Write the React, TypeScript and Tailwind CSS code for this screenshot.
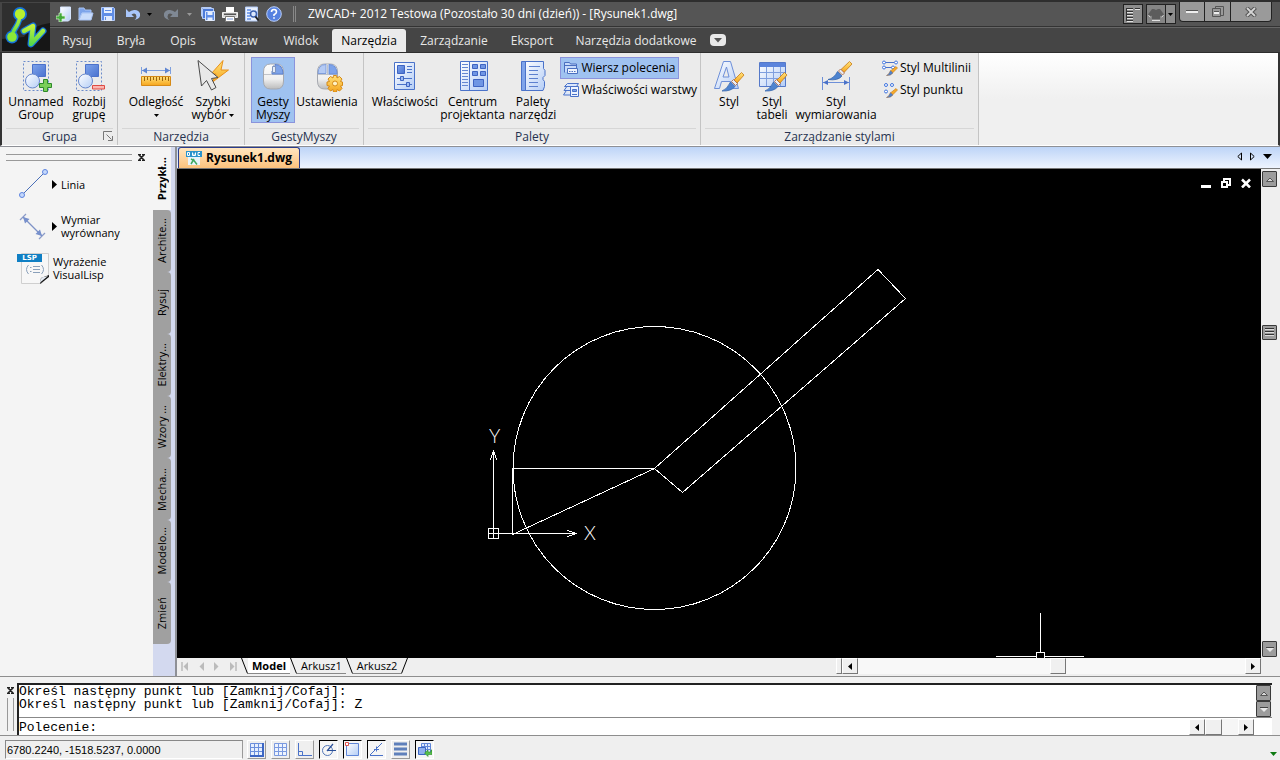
import React from "react";

type Kids = { children?: React.ReactNode };

const Svg = ({ w, h = w, children }: Kids & { w: number; h?: number }) => (
  <svg width={w} height={h} viewBox={`0 0 ${w} ${h}`} fill="none" className="block shrink-0" aria-hidden="true">
    {children}
  </svg>
);

const Gradients = () => (
  <svg width="0" height="0" className="absolute" aria-hidden="true">
    <defs>
      <linearGradient id="blue" x1="0" y1="0" x2="1" y2="1">
        <stop offset="0" stopColor="#7ea4ec" />
        <stop offset="1" stopColor="#4a72cf" />
      </linearGradient>
      <linearGradient id="pale" x1="0" y1="0" x2="1" y2="1">
        <stop offset="0" stopColor="#ffffff" />
        <stop offset="1" stopColor="#b4cdf6" />
      </linearGradient>
      <linearGradient id="gold" x1="0" y1="0" x2="0" y2="1">
        <stop offset="0" stopColor="#ffe27a" />
        <stop offset="1" stopColor="#f6a51c" />
      </linearGradient>
      <linearGradient id="mouse" x1="0" y1="0" x2="0" y2="1">
        <stop offset="0" stopColor="#fdfdfd" />
        <stop offset="0.6" stopColor="#efefef" />
        <stop offset="1" stopColor="#bcbcbc" />
      </linearGradient>
      <linearGradient id="lime" x1="0" y1="0" x2="0" y2="1">
        <stop offset="0" stopColor="#c3f53c" />
        <stop offset="1" stopColor="#57d84a" />
      </linearGradient>
    </defs>
  </svg>
);

/* ---------- application logo ---------- */
const Logo = () => (
  <Svg w={48}>
    <rect width="48" height="48" fill="#161616" />
    <path d="M0 0h48v20Q30 22 22 34L0 36z" fill="#2f2f2f" />
    <g stroke="#1573d8" strokeLinecap="round" strokeLinejoin="round">
      <path d="M18 10Q18 18 14 24T10 34" strokeWidth="6" />
      <path d="M22 28L31 23L29 41L41 28" strokeWidth="7" />
    </g>
    <circle cx="18" cy="11" r="7" fill="#1573d8" />
    <circle cx="10" cy="34" r="6.500" fill="#1573d8" />
    <g stroke="url(#lime)" strokeLinecap="round" strokeLinejoin="round">
      <path d="M18 10Q18 18 14 24T10 34" strokeWidth="3.500" />
      <path d="M22 28L31 23L29 41L41 28" strokeWidth="4.500" />
    </g>
    <circle cx="18" cy="11" r="5.200" fill="#b6f02f" />
    <circle cx="10" cy="34" r="4.800" fill="#8be838" />
  </Svg>
);

/* ---------- quick access icons ---------- */
const NewIcon = () => (
  <Svg w={16}>
    <path d="M4.500 1h10v12l-2 2h-8z" fill="url(#pale)" stroke="#d6e4fb" />
    <path d="M3 7h3v3h3v3H6v3H3v-3H0v-3h3z" fill="#43a83a" stroke="#d9f3d2" strokeWidth=".7" />
  </Svg>
);
const OpenIcon = () => (
  <Svg w={16}>
    <path d="M1 2h5l1 2h6v3H4l-3 7z" fill="#7da4ea" stroke="#a9c4f4" />
    <path d="M4 7h11l-2 7H1z" fill="#c9dcfb" stroke="#a9c4f4" />
  </Svg>
);
const SaveIcon = () => (
  <Svg w={16}>
    <path d="M1.500 1.500h12l1 1v12h-13z" fill="#5f8de6" stroke="#b4cbf6" />
    <path d="M4 2h8v5H4z" fill="#e6effe" />
    <path d="M4 10h8v5H4z" fill="#dfe9fc" />
    <path d="M5.500 11v3M5 4.500h6" stroke="#5f8de6" />
  </Svg>
);
const UndoIcon = ({ color }: { color: string }) => (
  <Svg w={16}>
    <path d="M1 3v8h8L6.500 8.500Q11 6 11.500 10.500Q11.500 12.500 9.500 14Q16 12.500 15 7.500Q13.500 3.500 9 4Q6 4.500 4 6z" fill={color} />
  </Svg>
);
const RedoIcon = ({ color }: { color: string }) => (
  <Svg w={16}>
    <path d="M15 3v8H7l2.500-2.500Q5 6 4.500 10.500Q4.500 12.500 6.500 14Q0 12.500 1 7.500Q2.500 3.500 7 4Q10 4.500 12 6z" fill={color} />
  </Svg>
);
const SaveAllIcon = () => (
  <Svg w={16}>
    <path d="M1.500 10.500v-9h10" stroke="#b4cbf6" />
    <path d="M2.500 12.500v-10h11v10z" fill="#4d7bd8" stroke="#b4cbf6" />
    <path d="M5.500 5.500h9v9h-9z" fill="#5f8de6" stroke="#dbe7fc" />
    <path d="M7.500 6h5v3h-5zM7.500 11.500h5V15h-5z" fill="#e6effe" />
  </Svg>
);
const PrintIcon = () => (
  <Svg w={16}>
    <path d="M4 1h8v5H4z" fill="#fff" />
    <path d="M0.500 6.500h15v5h-15z" fill="#d5d5d5" stroke="#f0f0f0" />
    <path d="M2 7.500h12v1.500H2z" fill="#555" />
    <path d="M3.500 10.500h9v5h-9z" fill="#fff" stroke="#777" />
    <path d="M5 13h6" stroke="#7a9ce0" />
  </Svg>
);
const PreviewIcon = () => (
  <Svg w={16}>
    <path d="M1.500 1h12v14h-12z" fill="#eaf1fe" stroke="#b4cbf6" />
    <path d="M3 4h4M3 7h3M3 10h3M3 13h4" stroke="#5f8de6" strokeWidth="1.500" />
    <circle cx="9.500" cy="8" r="3" fill="#dce8fd" stroke="#3d62b0" strokeWidth="1.500" />
    <path d="M11.500 10.500l3 4" stroke="#222" strokeWidth="2" />
  </Svg>
);
const HelpIcon = () => (
  <Svg w={16}>
    <circle cx="8" cy="8" r="7.300" fill="#5681e0" stroke="#b9cdf6" />
    <path d="M5.500 6q0-2.500 2.500-2.500T10.500 6Q10.500 7.300 8 8.700V10" stroke="#fff" strokeWidth="1.600" />
    <path d="M7.200 11.200h1.600v1.600H7.200z" fill="#fff" />
  </Svg>
);

/* ---------- large ribbon icons ---------- */
const GroupShapes = () => (
  <>
    <path d="M3.500 1.500h25v29h-25z" stroke="#6a8bcb" strokeDasharray="2 2" />
    <path d="M12.500 4.500h13v12h-13z" fill="url(#blue)" stroke="#4d72cb" />
    <circle cx="12.500" cy="21" r="7" fill="url(#pale)" stroke="#6787cc" />
  </>
);
const UnnamedGroupIcon = () => (
  <Svg w={32}>
    <GroupShapes />
    <path d="M23.500 19.500h4v4h4v4h-4v4h-4v-4h-4v-4h4z" fill="#7bcf58" stroke="#2d8a2a" />
  </Svg>
);
const UngroupIcon = () => (
  <Svg w={32}>
    <GroupShapes />
    <path d="M19.500 25.500h12v3.500h-12z" fill="#fbb5b0" stroke="#de4a43" />
  </Svg>
);
const DistanceIcon = () => (
  <Svg w={32}>
    <path d="M1.500 7v7M30.500 7v7M2 10.500h28" stroke="#7d9fde" />
    <path d="M2 10.500l5-3v6zM30 10.500l-5-3v6z" fill="#5f86d2" />
    <path d="M1.500 16.500h29v9h-29z" fill="url(#gold)" stroke="#d68a17" />
    <path d="M4.500 17v4M7.500 17v3M10.500 17v4M13.500 17v3M16.500 17v4M19.500 17v3M22.500 17v4M25.500 17v3M28.500 17v4" stroke="#9c6410" />
  </Svg>
);
const QuickSelectIcon = () => (
  <Svg w={32}>
    <path d="M26 0.500L14 14h5l-4 8.500L31.500 10H24z" fill="url(#gold)" stroke="#e8901a" strokeLinejoin="round" />
    <path d="M1 0.500L4.500 26l5-5.500 5 9.500 4.500-2.500-4.500-9 6.500-1z" fill="#e8e8e8" stroke="#4a4a4a" strokeLinejoin="round" />
  </Svg>
);
const MouseShape = () => (
  <>
    <path d="M6.500 12q0-8 7-8h6q7 0 7 8v9q0 8-7 8h-6q-7 0-7-8z" fill="url(#mouse)" stroke="#a6a9b0" />
    <path d="M7 14.500h19M16.500 5v9" stroke="#c0c3c9" />
  </>
);
const GestureIcon = () => (
  <Svg w={32}>
    <MouseShape />
    <path d="M18 4.500q8 0 8 9.500h-11v-3h3z" fill="#7ea3e8" stroke="#5c82d2" />
    <path d="M15.500 6.500h3v6h-3z" fill="#e4ebf8" stroke="#7f95bd" />
  </Svg>
);
const SettingsIcon = () => (
  <Svg w={32}>
    <MouseShape />
    <path d="M18 4.500q8 0 8 9.500h-8z" fill="#7da3ea" stroke="#6b8fd8" />
    <path d="M7 13.500q0-9 8-9v9z" fill="#b4caf4" stroke="#7f9ddb" />
    <g fill="url(#gold)" stroke="#d68a17">
      <path d="M22.500 15.500h3l.500 2.500 2.500-1.500 2.500 2.500-1.500 2.500 2 .500v3.500l-2 .500 1.500 2.500-2.500 2.500-2.500-1.500-.500 2.500h-3l-.500-2.500-2.500 1.500-2.500-2.500 1.500-2.500-2.500-.500v-3.500l2.500-.500-1.500-2.500 2.500-2.500 2.500 1.500z" />
      <circle cx="24" cy="23.500" r="2.500" fill="#fff3c4" />
    </g>
  </Svg>
);
const PropertiesIcon = () => (
  <Svg w={32}>
    <path d="M5.500 2.500h20v27h-20z" fill="url(#pale)" stroke="#4a72c9" />
    <path d="M8.500 5.500h7v8h-7z" fill="url(#blue)" stroke="#3f64c2" />
    <path d="M18 6.500h5M18 9.500h5M18 12.500h5M8 18.500h15M8 24.500h15" stroke="#4a72c9" />
    <path d="M11.500 16.500h3v4h-3zM17.500 22.500h3v4h-3z" fill="#9dbcf2" stroke="#3f64c2" />
  </Svg>
);
const DesignCenterIcon = () => (
  <Svg w={32}>
    <path d="M3.500 1.500h27v29h-27z" fill="url(#pale)" stroke="#4a72c9" />
    <path d="M12.500 2v28" stroke="#4a72c9" />
    <path d="M5 4.500h6M5 7.500h6M5 10.500h6M5 13.500h6M5 16.500h6M5 19.500h6M5 22.500h6M5 25.500h6" stroke="#6487d2" />
    <path d="M15.500 4.500h5v4h-5zM23.500 4.500h5v4h-5zM15.500 11.500h5v4h-5zM23.500 11.500h5v4h-5zM16.500 19.500h10v7h-10z" fill="#6f96e4" stroke="#3f64c2" />
  </Svg>
);
const ToolPalettesIcon = () => (
  <Svg w={32}>
    <path d="M5.500 1.500h21v7l1.500 2v5l-2 2v2l1.500 2v5l-1.500 4H5.500z" fill="url(#pale)" stroke="#4a72c9" />
    <path d="M4.500 1.500h4v29h-4z" fill="#7fa4ea" stroke="#4a72c9" />
    <path d="M12 6.500h11M12 10.500h9M12 14.500h9M12 18.500h9M12 22.500h9M12 26.500h9" stroke="#5c80cf" />
  </Svg>
);
const Brush = () => (
  <>
    <path d="M28.500 12.500l2.500 2.500-7 8-3-3z" fill="url(#gold)" stroke="#c67a14" strokeWidth=".8" />
    <path d="M20.500 19.500l4 4-2 2-4-4z" fill="#e8edf5" stroke="#a8603a" strokeWidth=".8" />
    <path d="M17.500 22l4.500 4.500q-4 5-13 4.500 5-1.500 8.500-9z" fill="#4d83cf" stroke="#2c5fa8" strokeWidth=".7" />
  </>
);
const TextStyleIcon = () => (
  <Svg w={32}>
    <path d="M1.500 28.500L10.500 1.500h7l8 27h-6l-2-7H8.500l-2 7zM10 17h6L13.500 7z" fill="url(#pale)" stroke="#6d8fd8" />
    <Brush />
  </Svg>
);
const TableStyleIcon = () => (
  <Svg w={32}>
    <path d="M3.500 2.500h26v24h-26z" fill="url(#pale)" stroke="#5579c9" />
    <path d="M4 3h25v4H4z" fill="#5b84dc" />
    <path d="M4 12.500h25M4 18.500h25M10.500 7v19M17.500 7v19M24.500 7v19" stroke="#7f9fde" />
    <Brush />
  </Svg>
);
const DimStyleIcon = () => (
  <Svg w={32}>
    <path d="M2.500 17v13M29.500 17v13M3 22.500h26" stroke="#6d8fd8" />
    <path d="M3 22.500l5-2.500v5zM29 22.500l-5-2.500v5z" fill="#4a72c9" />
    <path d="M29.500 1.500l2.500 2.500-8 8.500-3-3z" fill="url(#gold)" stroke="#c67a14" strokeWidth=".8" />
    <path d="M20.500 9l4 4-2 2-4-4z" fill="#e8edf5" stroke="#a8603a" strokeWidth=".8" />
    <path d="M17.500 11.500l4.500 4.500q-4 5-14 3.500 6-1 9.500-8z" fill="#4d83cf" stroke="#2c5fa8" strokeWidth=".7" />
  </Svg>
);

/* ---------- small ribbon icons ---------- */
const CommandLineIcon = () => (
  <Svg w={16}>
    <path d="M1.500 12.500v-10h5l1 1.500h6v4" fill="#c7dafa" stroke="#4a6fc0" />
    <path d="M2 5.500h11" stroke="#4a6fc0" />
    <path d="M4.500 8.500h10v5h-10z" fill="#eef4fe" stroke="#4a6fc0" />
    <path d="M6 11.500h1.500M8.500 11.500H10M11 11.500h1.500" stroke="#4a6fc0" />
  </Svg>
);
const LayerPropsIcon = () => (
  <Svg w={16}>
    <path d="M4.500 1.500h11l-2 3H1.500zM3.500 5L1 8.500h9M3 9l-2.500 4h9" fill="#dbe7fc" stroke="#4a72c9" />
    <path d="M7.500 4.500h8v10h-8z" fill="#eef4fe" stroke="#4a72c9" />
    <path d="M9.500 7.500h4v2h-4zM9 12.500h5" stroke="#4a72c9" fill="#7fa4ea" />
  </Svg>
);
const SmallBrush = () => (
  <>
    <path d="M14 6.500l1.500 1.500-4.500 4.500-2-2z" fill="#f6ab2a" stroke="#c67a14" strokeWidth=".6" />
    <path d="M8.500 10.500l2.500 2.500q-2.500 3-6.500 2.500 2.500-1 4-5z" fill="#4d83cf" stroke="#8d5f3a" strokeWidth=".5" />
  </>
);
const MultilineIcon = () => (
  <Svg w={16}>
    <path d="M3 2.500h9M3 7.500h7" stroke="#4a72c9" />
    <g fill="#fff" stroke="#3f74e0">
      <circle cx="2" cy="2.500" r="1.500" />
      <circle cx="14" cy="2.500" r="1.500" />
      <circle cx="2" cy="7.500" r="1.500" />
      <circle cx="11" cy="7.500" r="1.500" />
    </g>
    <SmallBrush />
  </Svg>
);
const PointStyleIcon = () => (
  <Svg w={16}>
    <g fill="#fff" stroke="#3f74e0">
      <circle cx="4" cy="3" r="1.500" />
      <circle cx="10" cy="3" r="1.500" />
      <circle cx="4" cy="9.500" r="1.500" />
    </g>
    <SmallBrush />
  </Svg>
);

/* ---------- tool palette icons ---------- */
const LineIcon = () => (
  <Svg w={32}>
    <path d="M5 27L28 4" stroke="#4a6fb8" />
    <circle cx="5" cy="27" r="2.500" fill="#c5d8fb" stroke="#5d84e0" />
    <circle cx="28" cy="4" r="2.500" fill="#c5d8fb" stroke="#5d84e0" />
  </Svg>
);
const AlignedDimIcon = () => (
  <Svg w={32}>
    <path d="M3 10l6-6M22 29l6-6" stroke="#8c9cc8" strokeWidth="1.300" />
    <path d="M6 7l19 19" stroke="#7e92c6" strokeWidth="1.300" />
    <path d="M6 7l2 6.500 4.500-4.500zM25 26l-2-6.500-4.500 4.500z" fill="#7790cc" />
  </Svg>
);
const LispIcon = () => (
  <div className="relative h-8 w-8 shrink-0">
    <Svg w={32}>
      <path d="M4.500 1.500h27v22l-7 8h-20z" fill="#f7f7f7" stroke="#cfcfcf" />
      <path d="M23 32l9-7v-2l-8 3z" fill="#111" />
      <path d="M22.500 31l2-5.500 6.500-1.500z" fill="#e6ecf4" />
      <path d="M11.500 13q-4 4.500 0 9M24.500 13q4 4.500 0 9M13 15.500h1.500M13 19.500h1.500M16 14.500h7M16 17.500h7M16 20.500h7" stroke="#8aa0ba" />
    </Svg>
    <span className="absolute left-0 top-0.5 w-[25px] bg-[#0f7fc4] text-center font-['DejaVu_Sans'] text-[7px] font-bold leading-[8px] text-white">
      LSP
    </span>
  </div>
);

const Caret = ({ className = "" }: { className?: string }) => (
  <svg width="5" height="3" viewBox="0 0 5 3" className={`inline-block ${className}`} aria-hidden="true">
    <path d="M0 0h5L2.500 3z" fill="currentColor" />
  </svg>
);

/* ---------- ribbon pieces ---------- */
const BigButton = ({ icon, width, active, children }: Kids & { icon: React.ReactNode; width: string; active?: boolean }) => (
  <button
    className={`flex h-[66px] ${width} flex-col items-center whitespace-nowrap border pt-0.5 text-xs leading-[13px] text-black ${
      active ? "border-[#8a93dc] bg-[#9fc2f0]" : "border-transparent"
    }`}
  >
    {icon}
    <span className="mt-[3px] block text-center">{children}</span>
  </button>
);

const SmallButton = ({ icon, active, children }: Kids & { icon: React.ReactNode; active?: boolean }) => (
  <button
    className={`flex h-[22px] items-center gap-0.5 whitespace-nowrap border px-0.5 text-xs text-black ${
      active ? "border-[#8a93dc] bg-[#9fc2f0]" : "border-transparent"
    }`}
  >
    {icon}
    {children}
  </button>
);

const Group = ({ title, width, pad = "pl-2", launcher, children }: Kids & { title: string; width: string; pad?: string; launcher?: boolean }) => (
  <section className={`flex ${width} shrink-0 flex-col border-r border-[#c4c4c4] bg-[#ebebeb]`}>
    <div className={`flex flex-1 items-start pt-1 ${pad}`}>{children}</div>
    <div className="relative mx-1 flex h-[17px] items-center justify-center border-t border-[#d6d6d6] text-xs text-[#26324f]">
      {title}
      {launcher && (
        <button aria-label="Opcje grupy" className="absolute right-0 top-0.5">
          <Svg w={10}>
            <path d="M.5 9V.5H9M3.500 3.500l5 5M9.500 5v4.500H5" stroke="#777" />
          </Svg>
        </button>
      )}
    </div>
  </section>
);

const ribbonTabs = [
  { name: "Rysuj", width: "w-[54px]" },
  { name: "Bryła", width: "w-[54px]" },
  { name: "Opis", width: "w-[50px]" },
  { name: "Wstaw", width: "w-[62px]" },
  { name: "Widok", width: "w-[62px]" },
  { name: "Narzędzia", width: "w-[74px]" },
  { name: "Zarządzanie", width: "w-[96px]" },
  { name: "Eksport", width: "w-[60px]" },
  { name: "Narzędzia dodatkowe", width: "w-[148px]" },
];

const quick = "flex w-[22px] items-center justify-center";

const Header = () => (
  <header className="flex h-[52px] shrink-0 border-t-2 border-[#2e2e2e] bg-[#454545]">
    <button aria-label="Menu programu" className="w-[50px] shrink-0 pl-0.5">
      <Logo />
    </button>
    <div className="flex min-w-0 flex-1 flex-col">
      <div className="flex h-[25px] items-center border-b border-[#333] bg-[#555] pl-[3px]">
        <button aria-label="Nowy" className={quick}><NewIcon /></button>
        <button aria-label="Otwórz" className={quick}><OpenIcon /></button>
        <button aria-label="Zapisz" className={quick}><SaveIcon /></button>
        <button aria-label="Cofnij" className="flex w-7 items-center justify-center"><UndoIcon color="#a9c6fa" /></button>
        <button aria-label="Lista cofnięć" className="flex w-2 items-center text-black"><Caret /></button>
        <button aria-label="Ponów" className="flex w-8 items-center justify-center"><RedoIcon color="#7f8894" /></button>
        <button aria-label="Lista ponowień" className="flex w-2.5 items-center text-[#999]"><Caret /></button>
        <button aria-label="Zapisz wszystko" className={quick}><SaveAllIcon /></button>
        <button aria-label="Drukuj" className={quick}><PrintIcon /></button>
        <button aria-label="Podgląd" className={quick}><PreviewIcon /></button>
        <button aria-label="Pomoc" className={quick}><HelpIcon /></button>
        <span className="mx-2 h-4 w-[3px] border-x border-[#888]" />
        <h1 className="ml-1 flex-1 truncate text-xs text-white">ZWCAD+ 2012 Testowa (Pozostało 30 dni (dzień)) - [Rysunek1.dwg]</h1>
        <div className="flex h-full items-center pr-2">
          <button aria-label="Układ" className="mr-[3px] flex h-5 w-5 items-center justify-center border border-[#222] bg-[#8d8d8d]">
            <Svg w={16}>
              <path d="M1 3.500h7M10 3.500h5M2 6.500h6M2 9.500h6M2 12.500h6M2 15.500h6" stroke="#e3e3e3" />
              <path d="M1 2.500h7M10 2.500h5M2 5.500h6M2 8.500h6M2 11.500h6M2 14.500h6M1.500 3v12" stroke="#333" />
            </Svg>
          </button>
          <button aria-label="Skórka" className="flex h-5 w-5 items-center justify-center border border-[#222] bg-[#858585]">
            <Svg w={16}>
              <path d="M4 3h2l2 1 2-1h2l4 5.500-2.500 2L12 9.500V13H4V9.500l-1.500 1L0 8.500z" fill="#5c5c5c" />
              <path d="M4 14.500h8M.5 9.500l2 1.500M15.500 9.500l-2 1.500" stroke="#e3e3e3" />
            </Svg>
          </button>
          <button aria-label="Lista skórek" className="mr-[3px] flex h-5 w-2.5 items-center justify-center border border-l-0 border-[#222] bg-[#8d8d8d] text-black">
            <Caret />
          </button>
          <div className="flex h-full items-start">
            <button aria-label="Minimalizuj" className="flex h-5 w-[26px] items-center justify-center rounded-bl border border-t-0 border-[#222] bg-[#9a9a9a]">
              <Svg w={12}><path d="M0 4.500h12" stroke="#555" /><path d="M0 6h12" stroke="#eee" strokeWidth="2" /></Svg>
            </button>
            <button aria-label="Przywróć" className="flex h-5 w-[26px] items-center justify-center border-b border-r border-[#222] bg-[#9a9a9a]">
              <Svg w={12}><path d="M3.500 3V.5h8v9H9" stroke="#555" /><path d="M.5 2.500h8v8h-8z" stroke="#555" /><path d="M2 5.500h5" stroke="#555" /><path d="M2 7h5" stroke="#eee" strokeWidth="2" /></Svg>
            </button>
            <button aria-label="Zamknij" className="flex h-5 w-[41px] items-center justify-center rounded-br border-b border-r border-[#222] bg-[#9a9a9a]">
              <Svg w={12} h={10}><path d="M1.500 .5l9 9M10.500 .5l-9 9" stroke="#555" strokeWidth="4" /><path d="M2 1l8 8M10 1L2 9" stroke="#d5d5d5" strokeWidth="1.800" /></Svg>
            </button>
          </div>
        </div>
      </div>
      <nav className="flex flex-1 items-end border-t border-[#666]">
        {ribbonTabs.map((t) => (
          <button
            key={t.name}
            className={`h-[23px] ${t.width} shrink-0 whitespace-nowrap pt-px text-xs ${
              t.name === "Narzędzia" ? "rounded-t-[3px] bg-[#ebebeb] text-black" : "text-[#e8e8e8]"
            }`}
          >
            {t.name}
          </button>
        ))}
        <button aria-label="Zwiń wstążkę" className="mb-1.5 flex h-3 w-4 items-center justify-center rounded bg-[#e8e8e8]">
          <Svg w={8} h={6}><path d="M0 1h8L4 5.500z" fill="#555" /></Svg>
        </button>
      </nav>
    </div>
  </header>
);

const Ribbon = () => (
  <div className="flex h-[94px] shrink-0 overflow-hidden border-x-2 border-b border-t border-x-[#333] border-b-white border-t-[#2e2e2e] bg-gradient-to-b from-white to-[#f0f0f0] to-50%">
    <Group title="Grupa" width="w-[116px]" pad="pl-1" launcher>
      <BigButton width="w-[60px]" icon={<UnnamedGroupIcon />}>Unnamed<br />Group</BigButton>
      <BigButton width="w-[46px]" icon={<UngroupIcon />}>Rozbij<br />grupę</BigButton>
    </Group>
    <Group title="Narzędzia" width="w-[127px]">
      <BigButton width="w-[60px]" icon={<DistanceIcon />}>Odległość<br /><Caret className="align-middle" /></BigButton>
      <BigButton width="w-[54px]" icon={<QuickSelectIcon />}>Szybki<br />wybór <Caret className="align-middle" /></BigButton>
    </Group>
    <Group title="GestyMyszy" width="w-[119px]" pad="pl-1.5">
      <BigButton width="w-[44px]" icon={<GestureIcon />} active>Gesty<br />Myszy</BigButton>
      <BigButton width="w-[64px]" icon={<SettingsIcon />}>Ustawienia</BigButton>
    </Group>
    <Group title="Palety" width="w-[337px]">
      <BigButton width="w-[66px]" icon={<PropertiesIcon />}>Właściwości</BigButton>
      <BigButton width="w-[70px]" icon={<DesignCenterIcon />}>Centrum<br />projektanta</BigButton>
      <BigButton width="w-[52px]" icon={<ToolPalettesIcon />}>Palety<br />narzędzi</BigButton>
      <div className="ml-0.5 flex flex-col items-start">
        <SmallButton icon={<CommandLineIcon />} active>Wiersz polecenia</SmallButton>
        <SmallButton icon={<LayerPropsIcon />}>Właściwości warstwy</SmallButton>
      </div>
    </Group>
    <Group title="Zarządzanie stylami" width="w-[278px]">
      <BigButton width="w-[40px]" icon={<TextStyleIcon />}>Styl</BigButton>
      <BigButton width="w-[46px]" icon={<TableStyleIcon />}>Styl<br />tabeli</BigButton>
      <BigButton width="w-[82px]" icon={<DimStyleIcon />}>Styl<br />wymiarowania</BigButton>
      <div className="ml-0.5 flex flex-col items-start">
        <SmallButton icon={<MultilineIcon />}>Styl Multilinii</SmallButton>
        <SmallButton icon={<PointStyleIcon />}>Styl punktu</SmallButton>
      </div>
    </Group>
  </div>
);

const paletteTabs = ["Archite...", "Rysuj", "Elektry...", "Wzory ...", "Mecha...", "Modelo...", "Zmień"];

const CloseX = () => (
  <Svg w={7}><path d="M0 .5h3M4 .5h3M0 6.500h3M4 6.500h3M1 1l5 5M6 1L1 6" stroke="#222" strokeWidth="1.500" /></Svg>
);

const Flyout = () => (
  <Svg w={5} h={9}><path d="M0 0l5 4.500L0 9z" fill="#000" /></Svg>
);

const Palette = () => (
  <aside className="flex shrink-0 border-r-2 border-[#8e9096] bg-[#d3d9ef]">
    <div className="w-[153px] bg-[#f4f4f4]">
      <div className="flex h-5 items-center gap-1.5 pl-1.5 pr-2">
        <span className="h-[7px] flex-1 border-y border-[#999]" />
        <button aria-label="Zamknij paletę"><CloseX /></button>
      </div>
      <div className="flex flex-col gap-2.5 pl-[17px] pt-px text-[11px] leading-[13px]">
        <button className="flex h-8 items-center gap-[3px] text-left"><LineIcon /><Flyout /><span className="ml-px">Linia</span></button>
        <button className="flex h-8 items-center gap-[3px] text-left"><AlignedDimIcon /><Flyout /><span className="ml-px">Wymiar<br />wyrównany</span></button>
        <button className="flex h-8 items-center gap-1 text-left"><LispIcon /><span>Wyrażenie<br />VisualLisp</span></button>
      </div>
    </div>
    <div className="flex w-[18px] flex-col">
      <button className="flex h-[63px] w-full items-center justify-center bg-[#f4f4f4]">
        <span className="rotate-180 text-[11px] font-bold leading-[14px] [writing-mode:vertical-rl]">Przykł...</span>
      </button>
      {paletteTabs.map((t) => (
        <button key={t} className="flex h-[62px] w-full items-center justify-center rounded-r-sm bg-[#a0a0a0]">
          <span className="rotate-180 whitespace-nowrap text-[11px] leading-[14px] [writing-mode:vertical-rl]">{t}</span>
        </button>
      ))}
    </div>
    <div className="w-1" />
  </aside>
);

const Drawing = () => (
  <svg className="block h-full w-full" fill="none" stroke="#fff" shapeRendering="crispEdges" role="img" aria-label="Rysunek">
    <circle cx="477.500" cy="298" r="141.500" />
    <path d="M477.500 298.500L701 99.500L728.500 128.500L505.500 322.500z" />
    <path d="M477.500 298.500H335.500V364.500z" />
    <path d="M311.500 358.500h10v10h-10zM316.500 368V280M312 363.500H400" />
    <path d="M316.500 280l-3 10M316.500 280l3 10M400 363.500l-10-3M400 363.500l-10 3" />
    <g fill="#fff" stroke="none" fontSize="19" fontWeight="300" fontFamily="Lato, 'Open Sans', sans-serif">
      <text x="312" y="273">Y</text>
      <text x="407" y="370">X</text>
    </g>
    <path d="M863.500 443v40M819 486.500h41M867 486.500h40M859.500 482.500h8v8h-8z" />
  </svg>
);

const GrayScroll = ({ dir }: { dir: "up" | "down" }) => (
  <button aria-label={dir === "up" ? "Przewiń w górę" : "Przewiń w dół"} className="flex h-4 w-[15px] shrink-0 items-center justify-center rounded-[1px] border border-[#3a3a3a] bg-[#9c9c9c]">
    <Svg w={8} h={5}>
      {dir === "up" ? <path d="M.5 4.500L4 1l3.500 3.500z" fill="#d8d8d8" stroke="#555" /> : <path d="M0 1h8L4 5z" fill="#e8e8e8" />}
      {dir === "down" && <path d="M0 .5h8" stroke="#444" />}
    </Svg>
  </button>
);

const raised = "flex h-4 shrink-0 items-center justify-center border border-b-[#777] border-r-[#777] border-l-white border-t-white bg-[#f0f0f0]";

const ArrowButton = ({ dir }: { dir: "left" | "right" }) => (
  <button aria-label={dir === "left" ? "Przewiń w lewo" : "Przewiń w prawo"} className={`${raised} w-4`}>
    <Svg w={4} h={7}>{dir === "left" ? <path d="M4 0v7L0 3.500z" fill="#000" /> : <path d="M0 0v7l4-3.500z" fill="#000" />}</Svg>
  </button>
);

const SheetTab = ({ name, active }: { name: string; active?: boolean }) => (
  <button className="flex h-4 items-center text-[11px] text-black">
    <Svg w={7} h={16}><path d="M.5 0l6 15.500" stroke="#000" /></Svg>
    <span className={`h-4 border-b border-[#888] px-1 leading-[15px] ${active ? "bg-white font-bold" : ""}`}>{name}</span>
  </button>
);

const Workspace = () => (
  <main className="flex min-w-0 flex-1 flex-col">
    <div className="flex h-[22px] shrink-0 items-end border-b border-[#777] bg-gradient-to-b from-[#bdd4f7] to-[#eef4fe]">
      <button className="ml-px flex h-[21px] items-center gap-1 rounded-t-[3px] border border-b-0 border-[#2b3c8c] bg-gradient-to-b from-[#ffe6c0] to-[#fcc27c] px-[7px] text-xs font-bold">
        <Svg w={16}>
          <path d="M2 3h12v12H2z" fill="#e9f4fb" />
          <path d="M0 1h16v6H0z" fill="#2a93cc" />
          <path d="M1.500 2.500v3h2v-3zM6.500 2.500v3h3v-3M8 3.500v2M14 2.500h-2v3h2" stroke="#fff" />
          <path d="M5 9l3 1.500 3 4M5 14l3-5" stroke="#40a860" strokeWidth="1.500" />
        </Svg>
        Rysunek1.dwg
      </button>
      <div className="ml-auto flex h-full items-center gap-2 pb-0.5 pr-2">
        <button aria-label="Poprzedni rysunek"><Svg w={5} h={9}><path d="M4.500 1v7L.8 4.500z" stroke="#000" /></Svg></button>
        <button aria-label="Następny rysunek"><Svg w={5} h={9}><path d="M.5 1v7l3.700-3.500z" stroke="#000" /></Svg></button>
        <button aria-label="Lista rysunków"><Svg w={9} h={5}><path d="M0 0h9L4.500 5z" fill="#000" /></Svg></button>
      </div>
    </div>
    <div className="flex min-h-0 flex-1 bg-[#efefef]">
      <div className="flex min-w-0 flex-1 flex-col">
        <div className="relative min-h-0 flex-1 overflow-hidden border-t border-black bg-black">
          <Drawing />
          <div className="absolute right-2.5 top-2 flex gap-2.5">
            <button aria-label="Minimalizuj rysunek"><Svg w={10}><path d="M0 8.500h10" stroke="#fff" strokeWidth="3" /></Svg></button>
            <button aria-label="Przywróć rysunek"><Svg w={10}><path d="M1 4h5v5H1zM3 3V1h6v6H7" stroke="#fff" strokeWidth="2" /></Svg></button>
            <button aria-label="Zamknij rysunek"><Svg w={10}><path d="M1 1.500l8 8M9 1.500l-8 8" stroke="#fff" strokeWidth="2.500" /></Svg></button>
          </div>
        </div>
        <div className="flex h-[18px] shrink-0 items-start">
          <div className="flex h-4 items-center gap-2.5 pl-1 pr-1">
            <button aria-label="Pierwszy arkusz"><Svg w={8} h={9}><path d="M1 0v9" stroke="#bbb" strokeWidth="1.500" /><path d="M7 0v9L2.500 4.500z" fill="#bbb" /></Svg></button>
            <button aria-label="Poprzedni arkusz"><Svg w={5} h={9}><path d="M5 0v9L.5 4.500z" fill="#bbb" /></Svg></button>
            <button aria-label="Następny arkusz"><Svg w={5} h={9}><path d="M0 0v9l4.500-4.500z" fill="#bbb" /></Svg></button>
            <button aria-label="Ostatni arkusz"><Svg w={8} h={9}><path d="M7 0v9" stroke="#bbb" strokeWidth="1.500" /><path d="M1 0v9l4.500-4.500z" fill="#bbb" /></Svg></button>
          </div>
          <SheetTab name="Model" active />
          <SheetTab name="Arkusz1" />
          <SheetTab name="Arkusz2" />
          <Svg w={7} h={16}><path d="M6.500 0L.5 15.500" stroke="#000" /></Svg>
          <div className="ml-auto flex h-4 w-[425px] shrink items-center bg-[#f8f8f8]">
            <span className={`${raised} w-1.5`} />
            <ArrowButton dir="left" />
            <span className="flex-1" />
            <span className={`${raised} w-4`} />
            <span className="w-[179px]" />
            <ArrowButton dir="right" />
          </div>
        </div>
      </div>
      <div className="flex w-[19px] shrink-0 flex-col items-start pb-[19px] pl-px pt-0.5">
        <GrayScroll dir="up" />
        <div className="flex flex-1 flex-col items-center justify-center">
          <div className="mb-41 flex h-[15px] w-[15px] items-center justify-center rounded-[1px] border border-[#3a3a3a] bg-[#9c9c9c]">
            <Svg w={9} h={8}><path d="M0 .5h9M0 3.500h9M0 6.500h9" stroke="#333" /><path d="M0 1.500h9M0 4.500h9M0 7.500h9" stroke="#ddd" /></Svg>
          </div>
        </div>
        <GrayScroll dir="down" />
      </div>
    </div>
  </main>
);

const CommandPanel = () => (
  <section className="flex shrink-0 border-y border-[#8e8e8e] bg-[#f2f2f2] pr-2 pt-1.5">
    <div className="flex w-[17px] shrink-0 flex-col items-center gap-1 pb-1 pl-1 pt-1">
      <button aria-label="Zamknij wiersz poleceń"><CloseX /></button>
      <span className="w-[7px] flex-1 border-x border-[#999]" />
    </div>
    <div className="flex min-w-0 flex-1 flex-col border-l-2 border-t-2 border-[#222] bg-white font-['Liberation_Mono',monospace] text-[13px] leading-[13px]">
      <div className="flex h-[33px] border-b border-[#888]">
        <div className="flex-1 whitespace-pre">
          <p>Określ następny punkt lub [Zamknij/Cofaj]:</p>
          <p>Określ następny punkt lub [Zamknij/Cofaj]: Z</p>
        </div>
        <div className="flex w-4 flex-col bg-[#f0f0f0]">
          <GrayScroll dir="up" />
          <GrayScroll dir="down" />
        </div>
      </div>
      <div className="flex h-[17px] items-end">
        <label htmlFor="command" className="pb-px">Polecenie:</label>
        <input id="command" className="ml-2 h-4 min-w-0 flex-1 outline-none" />
        <div className="mr-[18px] flex bg-[#f6f6f6]">
          <ArrowButton dir="left" />
          <span className={`${raised} w-[17px]`} />
          <span className="w-4" />
          <ArrowButton dir="right" />
        </div>
      </div>
    </div>
  </section>
);

const statusIcons: { label: string; on?: boolean; icon: React.ReactNode }[] = [
  {
    label: "Skok",
    icon: (
      <>
        <path d="M1.500 1.500h12v12h-12z" fill="#e6effe" />
        <path d="M1.500 1.500h12v12h-12zM5.500 1v13M9.500 1v13M1 5.500h13M1 9.500h13" stroke="#6a8edc" />
        <path d="M14 1v13H1" stroke="#3c66c4" strokeWidth="2" />
      </>
    ),
  },
  { label: "Siatka", icon: <path d="M1.500 1.500h12v12h-12zM5.500 1v13M9.500 1v13M1 5.500h13M1 9.500h13" fill="#eef4fe" stroke="#7b9ae0" /> },
  { label: "Orto", icon: <path d="M1.500 1v12.500H15M1.500 9.500h4v4" stroke="#4a72c9" /> },
  {
    label: "Biegunowe",
    on: true,
    icon: (
      <>
        <circle cx="6.500" cy="8.500" r="5" stroke="#5377b8" />
        <path d="M6 9L12 2M6 8.500h9" stroke="#2c5098" strokeWidth="1.200" />
      </>
    ),
  },
  {
    label: "Punkty charakterystyczne",
    on: true,
    icon: (
      <>
        <path d="M1.500 1.500h12v12h-12z" fill="url(#pale)" stroke="#5f86d8" />
        <path d="M.5.5h3v3h-3z" fill="#fff" stroke="#e0504a" />
      </>
    ),
  },
  {
    label: "Śledzenie",
    on: true,
    icon: (
      <>
        <path d="M1 13.500h13M1 13L13 1" stroke="#4a72c9" />
        <path d="M7.500 4.500v5M5 7.500h5" stroke="#4a72c9" />
      </>
    ),
  },
  {
    label: "Szerokość linii",
    icon: <path d="M1 2h13M1 7h13M1 12h13" stroke="#5f80bb" strokeWidth="3" />,
  },
  {
    label: "Model",
    on: true,
    icon: (
      <>
        <path d="M4.500 1.500h9v9h-9zM4 4.500h9M7.500 1v9M10.500 1v9M4 7.500h9" fill="#dfe9fc" stroke="#5f86d8" />
        <path d="M1.500 5.500h7v7h-7z" fill="#8fb0ee" stroke="#3c66c4" />
        <path d="M7.500 11l3.500-3v2h3v-2h1v4.500h-4v2z" fill="#57c04c" stroke="#2d8a2a" strokeWidth=".6" />
      </>
    ),
  },
];

const StatusBar = () => (
  <footer className="flex h-6 shrink-0 items-start bg-[#efefef] pl-[5px] pr-[3px] pt-1">
    <output className="mr-1 h-[19px] w-[238px] border border-b-white border-l-[#888] border-r-[#999] border-t-[#888] px-px font-['Liberation_Sans',sans-serif] text-[11px] leading-[18px]">
      6780.2240, -1518.5237, 0.0000
    </output>
    <div className="flex gap-[5px]">
      {statusIcons.map((s) => (
        <button
          key={s.label}
          aria-label={s.label}
          aria-pressed={!!s.on}
          className={`flex h-[19px] w-[19px] items-center justify-center border ${
            s.on ? "border-b-white border-l-black border-r-white border-t-black bg-[#f6f6f6]" : "border-b-[#999] border-l-white border-r-[#999] border-t-white"
          }`}
        >
          <Svg w={15}>{s.icon}</Svg>
        </button>
      ))}
    </div>
    <button aria-label="Menu paska stanu" className="ml-auto mt-3">
      <Svg w={7} h={4}><path d="M0 0h7L3.500 4z" fill="#0d7a12" /></Svg>
    </button>
  </footer>
);

export default function App() {
  return (
    <div className="flex h-screen min-h-[500px] flex-col overflow-hidden bg-[#efefef] font-['Open_Sans','Noto_Sans',sans-serif] text-black">
      <Gradients />
      <Header />
      <Ribbon />
      <div className="flex min-h-0 flex-1 border-t border-[#8e9096]">
        <Palette />
        <Workspace />
      </div>
      <CommandPanel />
      <StatusBar />
    </div>
  );
}
